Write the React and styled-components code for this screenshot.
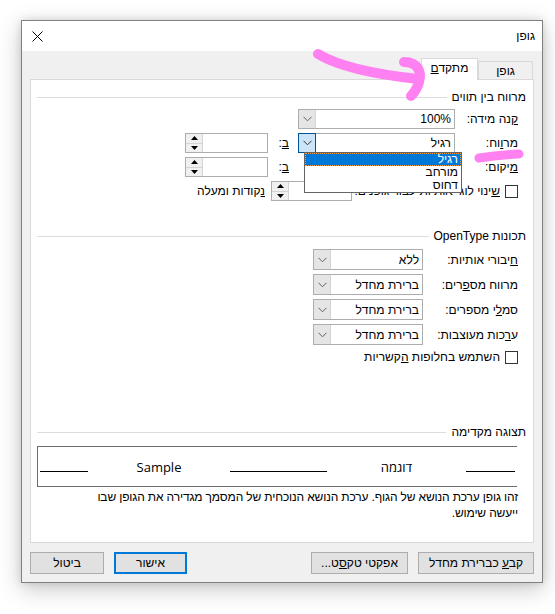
import React from 'react';
import styled, { createGlobalStyle } from 'styled-components';

const GlobalStyle = createGlobalStyle`
  html, body {
    margin: 0;
    padding: 0;
    background: #fff;
  }
  body {
    font-family: "Liberation Sans", Arial, sans-serif;
    font-size: 12px;
    color: #000;
  }
`;

const Page = styled.div`
  position: relative;
  width: 555px;
  height: 614px;
  padding: 20px 0 0 21px;
  box-sizing: border-box;
  overflow: hidden;
`;

const Dialog = styled.div`
  width: 522px;
  height: 563px;
  box-sizing: border-box;
  border: 1px solid #808080;
  background: #f0f0f0;
  box-shadow: 0 6px 22px rgba(0, 0, 0, 0.22), 0 0 8px rgba(0, 0, 0, 0.12);
  display: flex;
  flex-direction: column;
  direction: rtl;
`;

const TitleBar = styled.div`
  height: 30px;
  flex: none;
  background: #fff;
  display: flex;
  align-items: center;
  justify-content: space-between;
  padding: 0 7px 0 10px;
  font-size: 12px;
`;

const Body = styled.div`
  flex: 1;
  display: flex;
  flex-direction: column;
  padding: 7px 8px 8px 8px;
`;

const TabStrip = styled.div`
  height: 21px;
  display: flex;
  align-items: flex-end;
  padding-right: 1px;
`;

const Tab = styled.div`
  box-sizing: border-box;
  width: ${(p) => (p.$active ? 57 : 55)}px;
  height: ${(p) => (p.$active ? 22 : 18)}px;
  margin-bottom: ${(p) => (p.$active ? -1 : 0)}px;
  background: ${(p) => (p.$active ? '#fff' : '#f0f0f0')};
  border: 1px solid #d9d9d9;
  border-bottom: none;
  position: relative;
  z-index: ${(p) => (p.$active ? 2 : 1)};
  display: flex;
  align-items: center;
  justify-content: center;
  padding-bottom: ${(p) => (p.$active ? 3 : 0)}px;
`;

const Panel = styled.div`
  height: 464px;
  box-sizing: border-box;
  border: 1px solid #d9d9d9;
  background: #fff;
  padding: 0 7px 0 6px;
  display: flex;
  flex-direction: column;
`;

const SectionHead = styled.div`
  height: 14px;
  display: flex;
  align-items: center;
  gap: 5px;
  margin-top: ${(p) => p.$top}px;
  white-space: nowrap;

  &::after {
    content: '';
    flex: 1;
    height: 1px;
    background: #dcdcdc;
  }
`;

const Rows = styled.div`
  display: flex;
  flex-direction: column;
  gap: 4px;
  margin-top: ${(p) => p.$top}px;
  margin-right: 8px;
  position: relative;
`;

const Row = styled.div`
  height: ${(p) => p.$h || 20}px;
  display: flex;
  align-items: center;
  white-space: nowrap;
`;

const Label = styled.div`
  width: ${(p) => p.$w}px;
  flex: none;
  text-align: right;
`;

const SmallLabel = styled.div`
  width: 30px;
  flex: none;
  box-sizing: border-box;
  padding-right: 9px;
  text-align: right;
`;

const Spacer = styled.div`
  width: ${(p) => p.$w}px;
  flex: none;
`;

const Combo = styled.div`
  position: relative;
  width: ${(p) => p.$w}px;
  height: 100%;
  flex: none;
  box-sizing: border-box;
  border: 1px solid #adadad;
  background: #fff;
  display: flex;
  align-items: center;
`;

const ComboText = styled.div`
  flex: 1;
  padding-right: 3px;
  text-align: right;
`;

const DropButton = styled.div`
  align-self: stretch;
  box-sizing: border-box;
  margin: ${(p) => (p.$pressed ? '-1px 0 -1px -1px' : '0')};
  width: ${(p) => (p.$pressed ? 18 : 17)}px;
  background: ${(p) => (p.$pressed ? '#cce4f7' : '#e5e5e5')};
  border: ${(p) => (p.$pressed ? '1px solid #005499' : 'none')};
  border-right: ${(p) => (p.$pressed ? '1px solid #005499' : '1px solid #d4d4d4')};
  display: flex;
  align-items: center;
  justify-content: center;
`;

const DropList = styled.div`
  position: absolute;
  top: 100%;
  right: -8px;
  width: 158px;
  box-sizing: border-box;
  border: 1px solid #646464;
  background: #fff;
  z-index: 5;
  direction: rtl;
`;

const DropItem = styled.div`
  height: 13px;
  line-height: 13px;
  padding-right: 3px;
  text-align: right;
  background: ${(p) => (p.$selected ? '#0078d7' : '#fff')};
  color: ${(p) => (p.$selected ? '#fff' : '#000')};
  outline: ${(p) => (p.$selected ? '1px dotted #f59a3a' : 'none')};
  outline-offset: -1px;
`;

const Spinner = styled.div`
  width: ${(p) => p.$w}px;
  height: 100%;
  flex: none;
  box-sizing: border-box;
  border: 1px solid #adadad;
  background: #fff;
  display: flex;
  justify-content: flex-end;
`;

const SpinButtons = styled.div`
  width: 16px;
  display: flex;
  flex-direction: column;
  border-right: 1px solid #d4d4d4;
`;

const SpinHalf = styled.div`
  flex: 1;
  display: flex;
  align-items: center;
  justify-content: center;
  background: #f0f0f0;
  border-bottom: ${(p) => (p.$top ? '1px solid #d4d4d4' : 'none')};
`;

const CheckBox = styled.div`
  width: 13px;
  height: 13px;
  box-sizing: border-box;
  border: 1px solid #333;
  background: #fff;
  flex: none;
  margin-left: 5px;
`;

const CheckText = styled.div`
  width: ${(p) => (p.$w ? `${p.$w}px` : 'auto')};
  flex: none;
  overflow: hidden;
`;

const Preview = styled.div`
  margin-top: 7px;
  margin-right: 9px;
  height: 41px;
  box-sizing: border-box;
  border: 1px solid #6d6d6d;
  border-right: none;
  display: flex;
  align-items: center;
  padding: 0 2px 0 1px;
`;

const Rule = styled.div`
  width: ${(p) => p.$w}px;
  flex: none;
  height: 1px;
  background: #000;
  margin-top: 9px;
`;

const SampleWord = styled.div`
  width: ${(p) => p.$w}px;
  flex: none;
  text-align: center;
  font-size: 13px;
  font-family: "Open Sans", "Liberation Sans", sans-serif;
`;

const Description = styled.div`
  margin-top: 2px;
  margin-right: 8px;
  line-height: 16px;
  white-space: nowrap;
  letter-spacing: -0.15px;
`;

const Footer = styled.div`
  margin-top: 9px;
  height: 22px;
  display: flex;
  gap: 10px;
`;

const Button = styled.div`
  width: ${(p) => p.$w}px;
  height: 22px;
  box-sizing: border-box;
  background: #e1e1e1;
  border: ${(p) => (p.$default ? '2px solid #0078d7' : '1px solid #adadad')};
  display: flex;
  align-items: center;
  justify-content: center;
  white-space: nowrap;
  margin-right: ${(p) => (p.$push ? 'auto' : '0')};
`;

const Marker = styled.svg`
  position: absolute;
  inset: 0;
  pointer-events: none;
  z-index: 10;
`;

const Chevron = ({ dark }) => (
  <svg width="9" height="6" viewBox="0 0 9 6">
    <polyline points="0.5,0.8 4.5,4.8 8.5,0.8" fill="none" stroke={dark ? '#333' : '#606060'} strokeWidth="1" />
  </svg>
);

const Arrow = ({ up }) => (
  <svg width="7" height="4" viewBox="0 0 7 4">
    <polygon points={up ? '3.5,0 7,4 0,4' : '0,0 7,0 3.5,4'} fill="#000" />
  </svg>
);

const CloseIcon = () => (
  <svg width="11" height="11" viewBox="0 0 11 11">
    <path d="M0.5 0.5 L10.5 10.5 M10.5 0.5 L0.5 10.5" stroke="#000" strokeWidth="1" />
  </svg>
);

const SpinBox = ({ w }) => (
  <Spinner $w={w}>
    <SpinButtons>
      <SpinHalf $top>
        <Arrow up />
      </SpinHalf>
      <SpinHalf>
        <Arrow />
      </SpinHalf>
    </SpinButtons>
  </Spinner>
);

const ComboBox = ({ w, value, pressed, children }) => (
  <Combo $w={w}>
    <ComboText>{value}</ComboText>
    <DropButton $pressed={pressed}>
      <Chevron dark={pressed} />
    </DropButton>
    {children}
  </Combo>
);

const spacingOptions = ['רגיל', 'מורחב', 'דחוס'];

const openTypeRows = [
  { label: <><u>ח</u>יבורי אותיות:</>, value: 'ללא' },
  { label: <>מרווח מס<u>פ</u>רים:</>, value: 'ברירת מחדל' },
  { label: <>סמ<u>ל</u>י מספרים:</>, value: 'ברירת מחדל' },
  { label: <>ע<u>ר</u>כות מעוצבות:</>, value: 'ברירת מחדל' },
];

export default function App() {
  return (
    <Page>
      <GlobalStyle />
      <Dialog>
        <TitleBar>
          <span>גופן</span>
          <CloseIcon />
        </TitleBar>
        <Body>
          <TabStrip>
            <Tab><span>גופ<u>ן</u></span></Tab>
            <Tab $active><span>מתקד<u>ם</u></span></Tab>
          </TabStrip>
          <Panel>
            <SectionHead $top={10}>מרווח בין תווים</SectionHead>
            <Rows $top={5}>
              <Row>
                <Label $w={63}><u>ק</u>נה מידה:</Label>
                <ComboBox w={157} value="100%" />
              </Row>
              <Row>
                <Label $w={63}>מר<u>ו</u>וח:</Label>
                <ComboBox w={157} value="רגיל" pressed>
                  <DropList>
                    {spacingOptions.map((opt, i) => (
                      <DropItem key={opt} $selected={i === 0}>{opt}</DropItem>
                    ))}
                  </DropList>
                </ComboBox>
                <SmallLabel><u>ב</u>:</SmallLabel>
                <SpinBox w={83} />
              </Row>
              <Row>
                <Label $w={63}><u>מ</u>יקום:</Label>
                <Spacer $w={157} />
                <SmallLabel><u>ב</u>:</SmallLabel>
                <SpinBox w={83} />
              </Row>
              <Row>
                <CheckBox />
                <CheckText $w={148}><u>ש</u>ינוי לוגי אותיות עבור גופנים:</CheckText>
                <SpinBox w={81} />
                <Spacer $w={6} />
                <span><u>נ</u>קודות ומעלה</span>
              </Row>
            </Rows>

            <SectionHead $top={28}>תכונות OpenType</SectionHead>
            <Rows $top={6}>
              {openTypeRows.map((r, i) => (
                <Row key={i} $h={21}>
                  <Label $w={95}>{r.label}</Label>
                  <ComboBox w={110} value={r.value} />
                </Row>
              ))}
              <Row $h={14} style={{ marginTop: 1 }}>
                <CheckBox />
                <CheckText>השתמש בחלופות <u>ה</u>קשריות</CheckText>
              </Row>
            </Rows>

            <SectionHead $top={61}>תצוגה מקדימה</SectionHead>
            <Preview>
              <Rule $w={49} />
              <SampleWord $w={139}>דוגמה</SampleWord>
              <Rule $w={97} />
              <SampleWord $w={142}>Sample</SampleWord>
              <Rule $w={48} />
            </Preview>
            <Description>
              זהו גופן ערכת הנושא של הגוף. ערכת הנושא הנוכחית של המסמך מגדירה את הגופן שבו
              <br />
              ייעשה שימוש.
            </Description>
          </Panel>
          <Footer>
            <Button $w={116}><span>קב<u>ע</u> כברירת מחדל</span></Button>
            <Button $w={97}><span>אפקטי טק<u>ס</u>ט...</span></Button>
            <Button $w={73} $default $push><span>אישור</span></Button>
            <Button $w={74}><span>ביטול</span></Button>
          </Footer>
        </Body>
      </Dialog>
      <Marker width="555" height="614" viewBox="0 0 555 614">
        <g fill="none" stroke="#ff80f0" strokeWidth="10" strokeLinecap="round" strokeLinejoin="round">
          <path d="M318 54 C 338 66, 372 74, 418 79" />
          <path d="M404 62 C 418 62, 422 72, 419 82 C 417 89, 414 93, 411 96" />
          <path d="M479 158 Q 498 155, 519 154" strokeWidth="9" />
        </g>
      </Marker>
    </Page>
  );
}
